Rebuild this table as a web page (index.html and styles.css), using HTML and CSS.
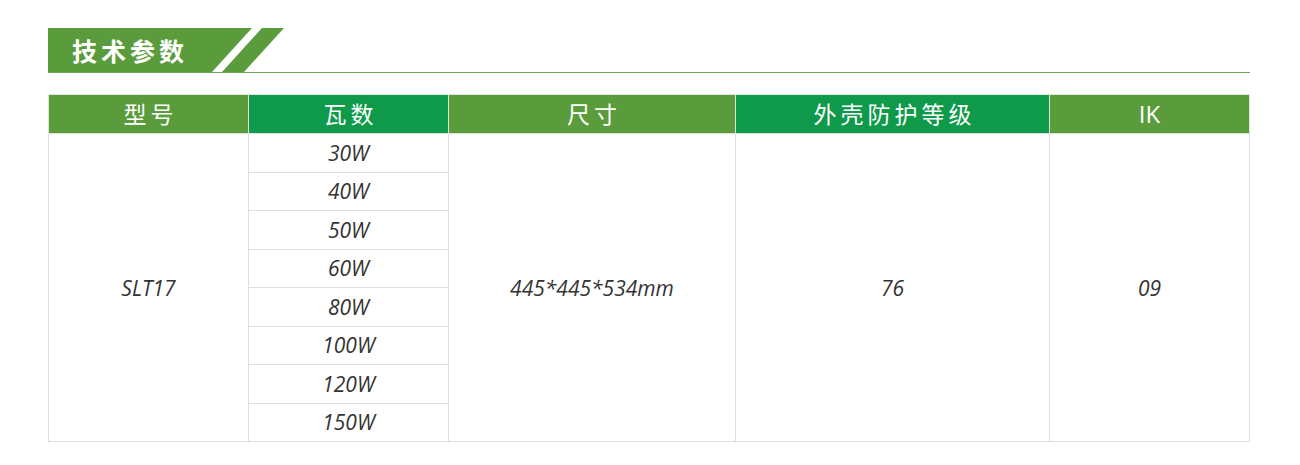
FILE: index.html
```html
<!DOCTYPE html>
<html lang="zh">
<head>
<meta charset="utf-8">
<link rel="stylesheet" href="styles.css">
</head>
<body>
<div class="page">
  <div class="heading">
    <div class="title">技术参数</div>
    <div class="stripe"></div>
  </div>
  <table class="spec">
    <colgroup>
      <col class="c1"><col class="c2"><col class="c3"><col class="c4"><col class="c5">
    </colgroup>
    <thead>
      <tr>
        <th class="lg">型号</th>
        <th class="dg">瓦数</th>
        <th class="lg">尺寸</th>
        <th class="dg">外壳防护等级</th>
        <th class="lg ik">IK</th>
      </tr>
    </thead>
    <tbody>
      <tr><td rowspan="8">SLT17</td><td>30W</td><td rowspan="8">445*445*534mm</td><td rowspan="8">76</td><td rowspan="8">09</td></tr>
      <tr><td>40W</td></tr>
      <tr><td>50W</td></tr>
      <tr><td>60W</td></tr>
      <tr><td>80W</td></tr>
      <tr><td>100W</td></tr>
      <tr><td>120W</td></tr>
      <tr><td>150W</td></tr>
    </tbody>
  </table>
</div>
</body>
</html>
```

FILE: styles.css
```css
html, body {
  margin: 0;
  padding: 0;
  background: #ffffff;
}
.page {
  padding: 28px 0 0 48px;
  width: 1202px;
}
.heading {
  display: flex;
  align-items: flex-end;
  height: 44px;
  border-bottom: 1px solid #6fa35a;
}
.title {
  width: 180px;
  height: 44px;
  padding-left: 24px;
  background: #5a9c3c;
  clip-path: polygon(0 0, 100% 0, calc(100% - 40px) 100%, 0 100%);
  color: #ffffff;
  font-family: "Noto Sans CJK SC", "Noto Sans", sans-serif;
  font-weight: 700;
  font-size: 25px;
  letter-spacing: 4px;
  line-height: 44px;
}
.stripe {
  width: 62px;
  height: 44px;
  margin-left: -30px;
  background: #5a9c3c;
  clip-path: polygon(40px 0, 62px 0, 22px 100%, 0 100%);
}
.spec {
  margin-top: 21px;
  width: 1201px;
  border-collapse: collapse;
  table-layout: fixed;
}
.c1 { width: 200px; }
.c2 { width: 200px; }
.c3 { width: 287px; }
.c4 { width: 314px; }
.c5 { width: 200px; }
.spec th {
  height: 36px;
  padding: 0 0 2px;
  color: #ffffff;
  font-family: "Noto Sans CJK SC", "Noto Sans", sans-serif;
  font-weight: 400;
  font-size: 23px;
  letter-spacing: 4px;
  text-indent: 4px;
  border: 1px solid #dfe6dc;
  border-bottom: none;
}
.spec th.ik {
  font-family: "Open Sans", "Noto Sans", sans-serif;
  letter-spacing: 0;
  text-indent: 0;
  font-size: 24px;
}
.lg { background: #5a9c3c; }
.dg { background: #0e9a4a; }
.spec td {
  height: 37.5px;
  padding: 0;
  text-align: center;
  border: 1px solid #dedede;
  font-family: "Open Sans", "Liberation Sans", sans-serif;
  font-style: italic;
  font-size: 21px;
  color: #333333;
}
```
